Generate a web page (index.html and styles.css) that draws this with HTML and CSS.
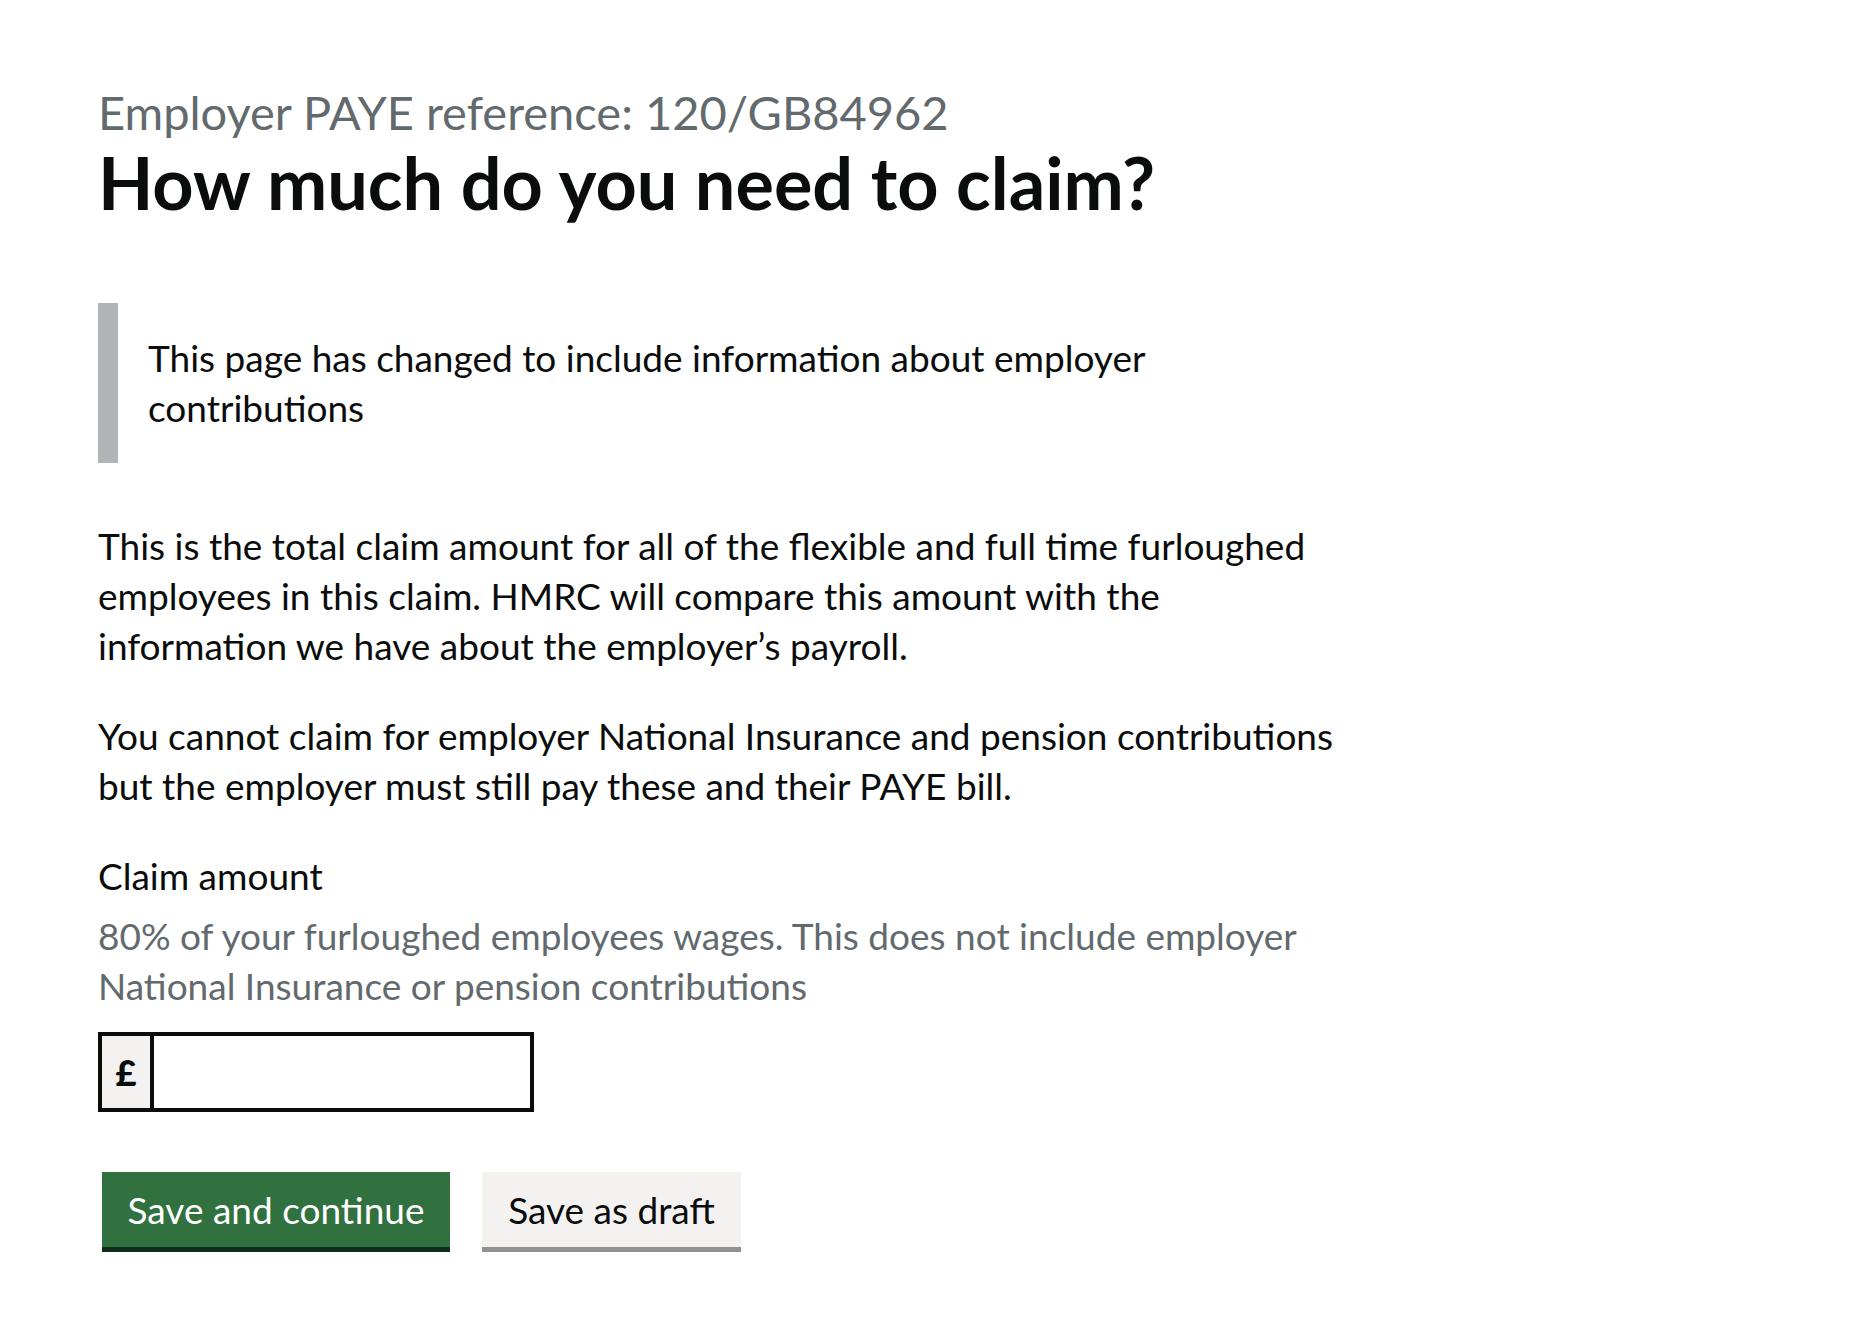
FILE: index.html
```html
<!DOCTYPE html>
<html lang="en">
<head>
<meta charset="utf-8">
<title>How much do you need to claim?</title>
<link rel="stylesheet" href="styles.css">
</head>
<body>
<main class="page">
  <span class="caption">Employer PAYE reference: 120/GB84962</span>
  <h1 class="heading">How much do you need to claim?</h1>
  <div class="inset">This page has changed to include information about employer contributions</div>
  <p class="body body-narrow">This is the total claim amount for all of the flexible and full time furloughed employees in this claim. HMRC will compare this amount with the information we have about the employer’s payroll.</p>
  <p class="body">You cannot claim for employer National Insurance and pension contributions but the employer must still pay these and their PAYE bill.</p>
  <div class="form-group">
    <label class="label" for="amount">Claim amount</label>
    <div class="hint">80% of your furloughed employees wages. This does not include employer National Insurance or pension contributions</div>
    <div class="input-wrap">
      <div class="prefix">£</div>
      <input class="input" id="amount" type="text">
    </div>
  </div>
  <div class="buttons">
    <button class="button button-primary">Save and continue</button>
    <button class="button button-secondary">Save as draft</button>
  </div>
</main>
</body>
</html>
```

FILE: styles.css
```css
html, body {
  margin: 0;
  padding: 0;
  background: #ffffff;
}
body {
  font-family: Lato, "Noto Sans", sans-serif;
  color: #0b0c0c;
}
.page {
  padding: 82px 0 40px 98px;
  width: 1262px;
}
.caption {
  display: block;
  font-size: 47px;
  line-height: 60px;
  color: #626a6e;
  margin-bottom: 0;
}
.heading {
  font-size: 72px;
  line-height: 80px;
  font-weight: 700;
  margin: 0 0 81px 0;
}
.inset {
  border-left: 20px solid #b1b4b6;
  padding: 30px 30px;
  margin: 0 0 58px 0;
  font-size: 37px;
  line-height: 50px;
  max-width: 1040px;
}
.body {
  font-size: 37px;
  line-height: 50px;
  margin: 0 0 40px 0;
}
.body-narrow {
  max-width: 1212px;
}
.form-group {
  margin-bottom: 60px;
}
.label {
  display: block;
  font-size: 37px;
  line-height: 50px;
  margin-bottom: 10px;
}
.hint {
  font-size: 37px;
  line-height: 50px;
  color: #626a6e;
  margin-bottom: 21px;
}
.input-wrap {
  display: flex;
  width: 436px;
  height: 80px;
}
.prefix {
  box-sizing: border-box;
  flex: none;
  width: 52px;
  height: 80px;
  background: #f3f2f1;
  border: 4px solid #0b0c0c;
  border-right: 0;
  font-size: 36px;
  font-weight: 900;
  display: flex;
  align-items: center;
  justify-content: center;
}
.input {
  box-sizing: border-box;
  flex: 1 1 0;
  min-width: 0;
  width: 0;
  height: 80px;
  border: 4px solid #0b0c0c;
  margin: 0;
  padding: 0 10px;
  font-size: 36px;
  outline: none;
  border-radius: 0;
  background: #ffffff;
}
.buttons {
  display: flex;
  gap: 32px;
  padding-left: 4px;
}
.button {
  box-sizing: border-box;
  font-family: Lato, "Noto Sans", sans-serif;
  font-size: 37px;
  line-height: 50px;
  height: 75px;
  border: 0;
  border-radius: 0;
  padding: 0 20px;
  margin: 0;
  cursor: pointer;
  white-space: nowrap;
}
.button-primary {
  background: #31703f;
  color: #ffffff;
  box-shadow: 0 5px 0 #0f2d1a;
  width: 348px;
}
.button-secondary {
  background: #f3f2f1;
  color: #0b0c0c;
  box-shadow: 0 5px 0 #929191;
  width: 259px;
}
```
